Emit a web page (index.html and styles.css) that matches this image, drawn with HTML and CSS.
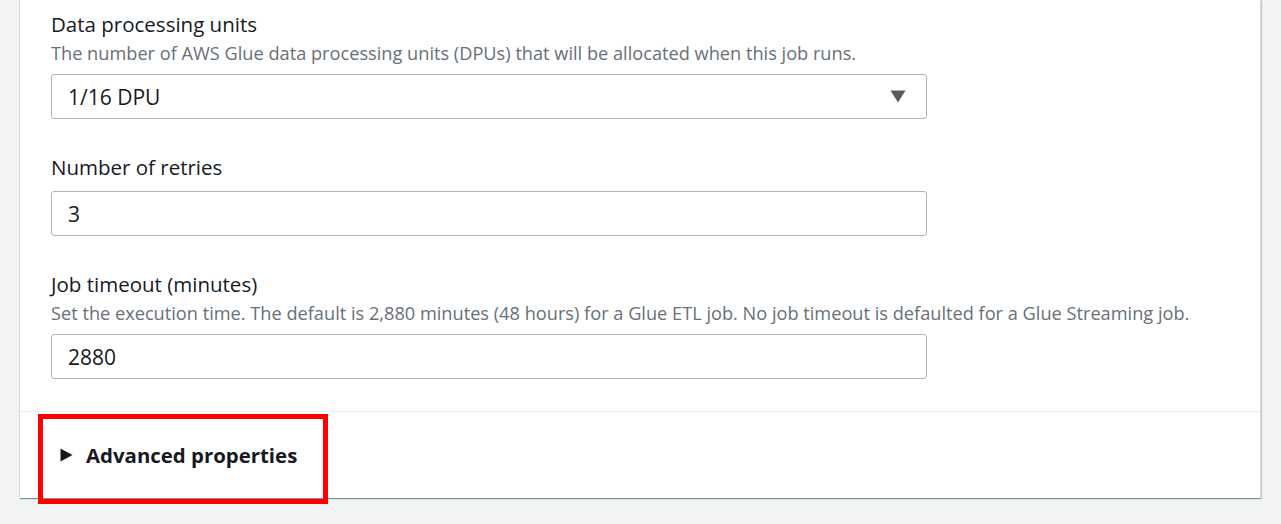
FILE: index.html
```html
<!DOCTYPE html>
<html lang="en">
<head>
<meta charset="utf-8">
<title>Job details</title>
<link rel="stylesheet" href="styles.css">
</head>
<body>
<div class="page">
  <div class="card">
    <div class="card-body">
      <div class="field">
        <div class="label">Data processing units</div>
        <div class="desc">The number of AWS Glue data processing units (DPUs) that will be allocated when this job runs.</div>
        <div class="control select">
          <span class="value">1/16 DPU</span>
          <svg class="caret" width="16" height="13" viewBox="0 0 16 13"><path d="M0.5 0.5 H15.5 L8 12.5 Z" fill="#545b64"/></svg>
        </div>
      </div>
      <div class="field">
        <div class="label">Number of retries</div>
        <div class="control"><span class="value">3</span></div>
      </div>
      <div class="field">
        <div class="label">Job timeout (minutes)</div>
        <div class="desc">Set the execution time. The default is 2,880 minutes (48 hours) for a Glue ETL job. No job timeout is defaulted for a Glue Streaming job.</div>
        <div class="control"><span class="value">2880</span></div>
      </div>
    </div>
    <div class="card-footer">
      <div class="expander">
        <svg class="expand-icon" width="13" height="14" viewBox="0 0 13 14"><path d="M0.5 0.5 L12.5 7 L0.5 13.5 Z" fill="#16191f"/></svg>
        <span class="expander-title">Advanced properties</span>
      </div>
      <div class="highlight"></div>
    </div>
  </div>
</div>
</body>
</html>
```
FILE: styles.css
```css
* { box-sizing: border-box; }
html, body { margin: 0; padding: 0; }
body {
  background: #f2f3f3;
  font-family: "Open Sans", "Noto Sans", sans-serif;
  color: #16191f;
  width: 1281px;
  height: 524px;
  overflow: hidden;
}
.page {
  padding: 0 20px 0 19px;
}
.card {
  background: #ffffff;
  border-left: 1px solid #d5dbdb;
  border-right: 1px solid #d5dbdb;
  box-shadow: 0 2px 1px -1px rgba(0, 28, 36, 0.35), 1px 1px 1px rgba(0, 28, 36, 0.18);
}
.card-body {
  padding: 9px 0 32px 31px;
  display: flex;
  flex-direction: column;
  gap: 33px;
}
.field {
  width: 876px;
  display: flex;
  flex-direction: column;
}
.label {
  font-size: 20.5px;
  line-height: 30px;
}
.desc {
  font-size: 18.2px;
  line-height: 24px;
  color: #687078;
  margin-top: 2px;
  margin-bottom: 9px;
  white-space: nowrap;
}
.label + .control { margin-top: 9px; }
.control {
  height: 45px;
  border: 1px solid #aab7b8;
  border-radius: 3px;
  display: flex;
  align-items: center;
  justify-content: space-between;
  padding: 0 20px 0 16px;
  font-size: 21px;
}
.caret { display: block; }
.card-footer {
  position: relative;
  border-top: 1px solid #eaeded;
  height: 87px;
  padding-left: 40px;
  display: flex;
  align-items: center;
}
.expander {
  display: flex;
  align-items: center;
  gap: 13px;
}
.expand-icon { display: block; }
.expander-title {
  font-weight: 700;
  font-size: 20.4px;
  line-height: 28px;
}
.highlight {
  position: absolute;
  left: 18px;
  top: 2px;
  width: 290px;
  height: 90px;
  border: 5px solid #ff0000;
}
```
